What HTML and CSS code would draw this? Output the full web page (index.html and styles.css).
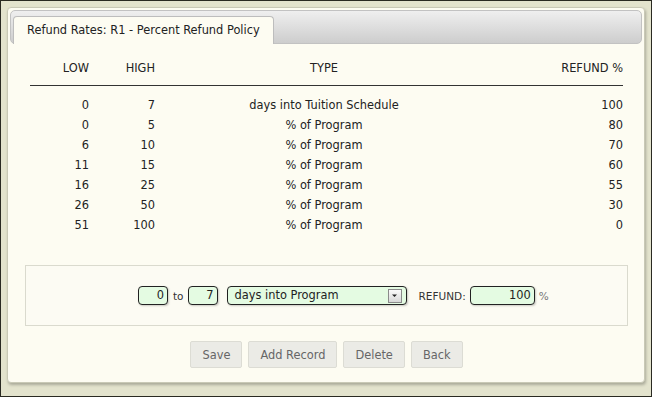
FILE: index.html
```html
<!DOCTYPE html>
<html lang="en">

<head>
  <meta charset="UTF-8" />
  <title>Refund Rates</title>
  <link rel="stylesheet" href="styles.css">
</head>

<body>
  <div class="panel">
    <div class="tabbar">
      <div class="tab">Refund Rates: R1 - Percent Refund Policy</div>
    </div>

    <table class="rates">
      <thead>
        <tr>
          <th class="low">LOW</th>
          <th class="high">HIGH</th>
          <th class="type">TYPE</th>
          <th class="refund">REFUND %</th>
        </tr>
      </thead>
      <tbody>
        <tr><td class="low">0</td><td class="high">7</td><td class="type">days into Tuition Schedule</td><td class="refund">100</td></tr>
        <tr><td class="low">0</td><td class="high">5</td><td class="type">% of Program</td><td class="refund">80</td></tr>
        <tr><td class="low">6</td><td class="high">10</td><td class="type">% of Program</td><td class="refund">70</td></tr>
        <tr><td class="low">11</td><td class="high">15</td><td class="type">% of Program</td><td class="refund">60</td></tr>
        <tr><td class="low">16</td><td class="high">25</td><td class="type">% of Program</td><td class="refund">55</td></tr>
        <tr><td class="low">26</td><td class="high">50</td><td class="type">% of Program</td><td class="refund">30</td></tr>
        <tr><td class="low">51</td><td class="high">100</td><td class="type">% of Program</td><td class="refund">0</td></tr>
      </tbody>
    </table>

    <div class="editor">
      <span class="field num">0</span>
      <span class="label to">to</span>
      <span class="field num">7</span>
      <span class="field select">
        days into Program
        <span class="arrow">
          <svg width="9" height="9" viewBox="0 0 9 9"><path d="M2 3.5h5L4.5 6z" fill="#222"/></svg>
        </span>
      </span>
      <span class="label refund-label">REFUND:</span>
      <span class="field num wide">100</span>
      <span class="label pct">%</span>
    </div>

    <div class="buttons">
      <button>Save</button>
      <button>Add Record</button>
      <button>Delete</button>
      <button>Back</button>
    </div>
  </div>
</body>

</html>
```

FILE: styles.css
```css
html, body {
  margin: 0;
  height: 100%;
}
body {
  box-sizing: border-box;
  border: 1px solid #2a2a22;
  background: #e3e3cd;
  font-family: "DejaVu Sans", sans-serif;
  font-size: 11.4px;
  color: #222;
  padding: 6px;
}
.panel {
  background: #fdfcf2;
  border: 1px solid #c9c9b6;
  border-radius: 4px;
  box-shadow: 1px 2px 3px rgba(0, 0, 0, 0.25);
  height: 376px;
  box-sizing: border-box;
}
.tabbar {
  margin: 2px;
  height: 32px;
  border: 1px solid #c2c2c2;
  border-radius: 5px;
  background: linear-gradient(#efefef, #cdcdcd);
  display: flex;
  align-items: flex-end;
  padding-left: 2px;
}
.tab {
  background: #fdfcf2;
  border: 1px solid #bdbdbd;
  border-bottom: none;
  border-radius: 4px 4px 0 0;
  height: 27px;
  line-height: 27px;
  padding: 0 13px;
  margin-bottom: -1px;
}
.rates {
  border-collapse: collapse;
  margin: 12px 0 0 22px;
  width: 593px;
}
.rates th {
  font-weight: normal;
  height: 24px;
  padding: 0 0 5px;
  border-bottom: 1px solid #333;
}
.rates td {
  height: 20px;
  padding: 0;
}
.rates tbody tr:first-child td {
  padding-top: 9px;
}
.low { width: 59px; text-align: right; padding-right: 1px !important; }
.high { width: 65px; text-align: right; }
.type { width: 338px; text-align: center; }
.refund { text-align: right; }
.editor {
  margin: 30px 16px 0 17px;
  height: 59px;
  border: 1px solid #dadace;
  background: #fcfbf3;
  display: flex;
  align-items: center;
  padding-left: 112px;
}
.field {
  box-sizing: border-box;
  height: 19px;
  border: 1px solid #222;
  border-radius: 4px;
  background: #e4fbe2;
  box-shadow: 1px 1px 2px rgba(0, 0, 0, 0.2);
  line-height: 17px;
}
.num {
  width: 30px;
  text-align: right;
  padding-right: 3px;
}
.num.wide {
  width: 65px;
}
.select {
  width: 180px;
  padding-left: 7px;
  display: flex;
  align-items: center;
  justify-content: space-between;
  padding-right: 4px;
  margin-left: 9px;
}
.arrow {
  width: 14px;
  height: 14px;
  box-sizing: border-box;
  border: 1px solid #8a8a8a;
  background: linear-gradient(#fafafa, #d8d8d8);
  display: flex;
  align-items: center;
  justify-content: center;
}
.label {
  color: #333;
  font-size: 10.5px;
}
.to {
  margin: 0 4px 0 5px;
}
.refund-label {
  margin: 0 4px 0 12px;
}
.pct {
  color: #777;
  margin-left: 4px;
}
.buttons {
  display: flex;
  justify-content: center;
  gap: 6px;
  margin-top: 15px;
  padding-left: 1px;
}
.buttons button {
  font-family: "DejaVu Sans", sans-serif;
  font-size: 11.4px;
  color: #666;
  background: #ebebe6;
  border: 1px solid #dcdcd4;
  border-radius: 2px;
  height: 27px;
  padding: 0 11px;
}
```
